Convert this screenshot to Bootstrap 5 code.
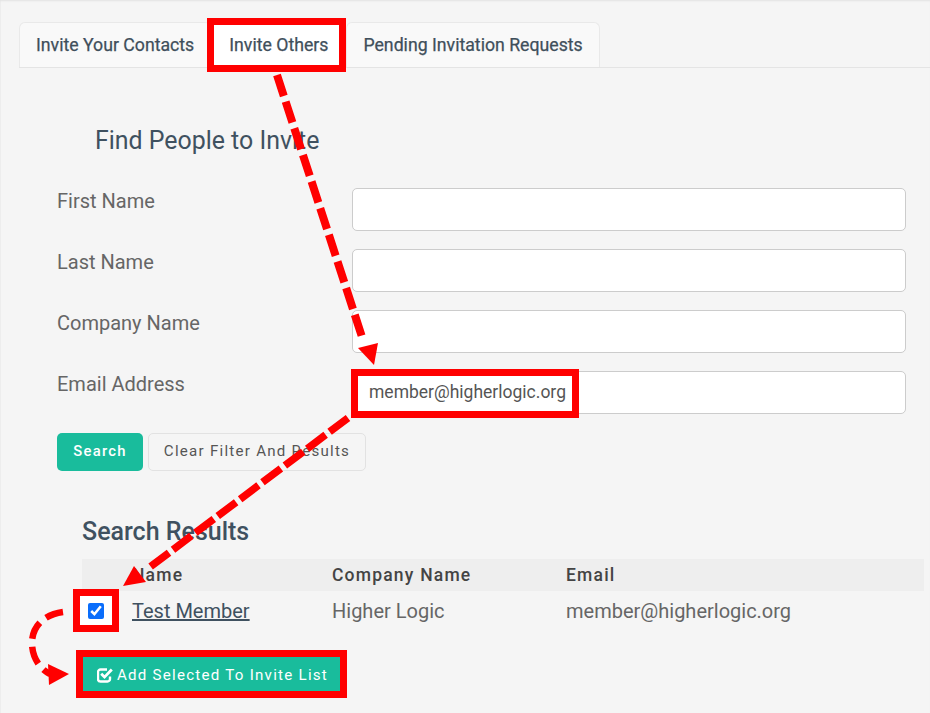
<!DOCTYPE html>
<html lang="en">
<head>
<meta charset="utf-8">
<title>Invite Others</title>
<link rel="stylesheet" href="https://cdn.jsdelivr.net/npm/bootstrap@5.3.0/dist/css/bootstrap.min.css">
<style>
html,body{height:713px;overflow:hidden}
body{background:#f5f5f5;font-family:Roboto,sans-serif;color:#666;position:relative;box-shadow:inset 0 2px 2px -1px #e2e2e2,inset 1px 0 0 #eee}
.tabs-wrap{padding:22px 0 0 19px}
.tabs-wrap .nav-tabs{border-bottom:1px solid #e4e4e4}
.tabs-wrap .nav-link{font-size:17.7px;font-weight:400;-webkit-text-stroke:.25px #3f4f5b;color:#3f4f5b;padding:0 16px;height:45px;line-height:44px;background:#f9f9f9;border:1px solid #e9e9e9;border-bottom:0;border-radius:6px 6px 0 0;margin:0}
.tabs-wrap .nav-link.is-on{background:#fff;margin-left:1px;margin-right:1px}
.find-title{font-size:24.9px;font-weight:400;color:#3f5160;margin:0;padding:57px 0 0 95px;line-height:32px}
.form-area{padding:31px 24px 0 57px}
.field-row{display:flex;height:42.500px;margin-bottom:18.500px}
.field-label{width:295px;font-size:20px;line-height:26px;color:#666;margin:0}
.field-input{flex:1;height:42.500px;font-size:17.5px;color:#555;padding:0 16px;border-color:#ccc;border-radius:5px}
.btn-go,.btn-clear{font-size:14.8px;letter-spacing:1.25px;line-height:18px}
.btn-go{background:#19bc9c;color:#fff;font-weight:500;border:0;width:86px;height:38px;padding:0 0 2px;border-radius:5px}
.btn-clear{background:#f5f5f5;color:#555;border:1px solid #e2e2e2;width:218px;height:38px;padding:0 0 2px;border-radius:5px;font-size:15.1px}
.btn-row{margin-top:19.500px;gap:5px}
.results-title{font-size:25px;font-weight:500;color:#3f5160;margin:0;padding:45px 0 0 82px;line-height:32px}
.results-wrap{padding:11px 6px 0 82px}
.results{margin:0;table-layout:fixed;width:842px;--bs-table-bg:transparent;color:#666}
.results th{background:#eee;font-size:17.5px;font-weight:500;letter-spacing:1.2px;color:#444;padding:0;height:32px;vertical-align:middle;border:0}
.results td{font-size:20px;padding:0;height:40px;vertical-align:middle;border:0;color:#666}
.col-chk{width:50px}.col-name{width:200px}.col-co{width:234px}
.chk-back{display:block;width:32px;height:32px;margin-left:-2px;background:#fff;padding:8px}
.results .form-check-input{width:16px;height:16px;margin:0;display:block;appearance:auto;-webkit-appearance:auto;accent-color:#0a6dfb}
.results a{color:#3f5160;text-decoration:underline}
.add-wrap{padding:26px 0 0 83px}
.btn-add{background:#19bc9c;color:#fff;font-weight:400;font-size:15.100px;letter-spacing:1.25px;line-height:20px;border:0;border-radius:0;width:258px;height:34px;padding:2px 0 0 1px;display:flex;align-items:center;justify-content:center;gap:4px}
.notes{position:absolute;left:0;top:0;width:930px;height:713px;pointer-events:none}
</style>
</head>
<body>
<div class="tabs-wrap">
  <ul class="nav nav-tabs">
    <li class="nav-item"><a class="nav-link" href="#">Invite Your Contacts</a></li>
    <li class="nav-item"><a class="nav-link is-on" href="#">Invite Others</a></li>
    <li class="nav-item"><a class="nav-link" href="#">Pending Invitation Requests</a></li>
  </ul>
</div>
<h2 class="find-title">Find People to Invite</h2>
<form class="form-area">
  <div class="field-row"><label class="field-label">First Name</label><input class="form-control field-input" type="text"></div>
  <div class="field-row"><label class="field-label">Last Name</label><input class="form-control field-input" type="text"></div>
  <div class="field-row"><label class="field-label">Company Name</label><input class="form-control field-input" type="text"></div>
  <div class="field-row mb-0"><label class="field-label">Email Address</label><input class="form-control field-input" type="text" value="member@higherlogic.org"></div>
  <div class="d-flex btn-row"><button type="button" class="btn btn-go">Search</button><button type="button" class="btn btn-clear">Clear Filter And Results</button></div>
</form>
<h3 class="results-title">Search Results</h3>
<div class="results-wrap">
  <table class="table results">
    <thead><tr><th class="col-chk"></th><th class="col-name">Name</th><th class="col-co">Company Name</th><th>Email</th></tr></thead>
    <tbody><tr><td><span class="chk-back"><input class="form-check-input" type="checkbox" checked></span></td><td><a href="#">Test Member</a></td><td>Higher Logic</td><td>member@higherlogic.org</td></tr></tbody>
  </table>
</div>
<div class="add-wrap">
  <button type="button" class="btn btn-add">
    <svg width="16" height="16" viewBox="0 0 16 16" fill="none" stroke="#fff" stroke-width="2.400"><path d="M13 9.500V12a2.500 2.500 0 0 1-2.500 2.500H3.500A2.500 2.500 0 0 1 1 12V5a2.500 2.500 0 0 1 2.500-2.500H10"/><path d="M4.200 6.800l3.300 3.300 7.300-7.600" stroke-width="2.800"/></svg>
    Add Selected To Invite List
  </button>
</div>
<svg class="notes" viewBox="0 0 930 713" fill="none" stroke="#f00">
  <rect x="210.500" y="21.500" width="132" height="47" stroke-width="7"/>
  <rect x="354.500" y="372.500" width="221" height="42" stroke-width="7"/>
  <rect x="76.500" y="592.500" width="39" height="36" stroke-width="7"/>
  <rect x="79.500" y="653.500" width="264" height="41" stroke-width="7"/>
  <path d="M277 75L363 340" stroke-width="8" stroke-dasharray="22 6"/>
  <path d="M358 348L378 343L374 365Z" fill="#f00" stroke="none"/>
  <path d="M348 418L150 567" stroke-width="7.500" stroke-dasharray="23 5"/>
  <path d="M134 566L146 582L123 586Z" fill="#f00" stroke="none"/>
  <path d="M63 612C42 615 32 628 32 643C32 655 38 668 50 674" stroke-width="6.500" stroke-dasharray="18 8"/>
  <path d="M48 664L69 674L49 685Z" fill="#f00" stroke="none"/>
</svg>
</body>
</html>
